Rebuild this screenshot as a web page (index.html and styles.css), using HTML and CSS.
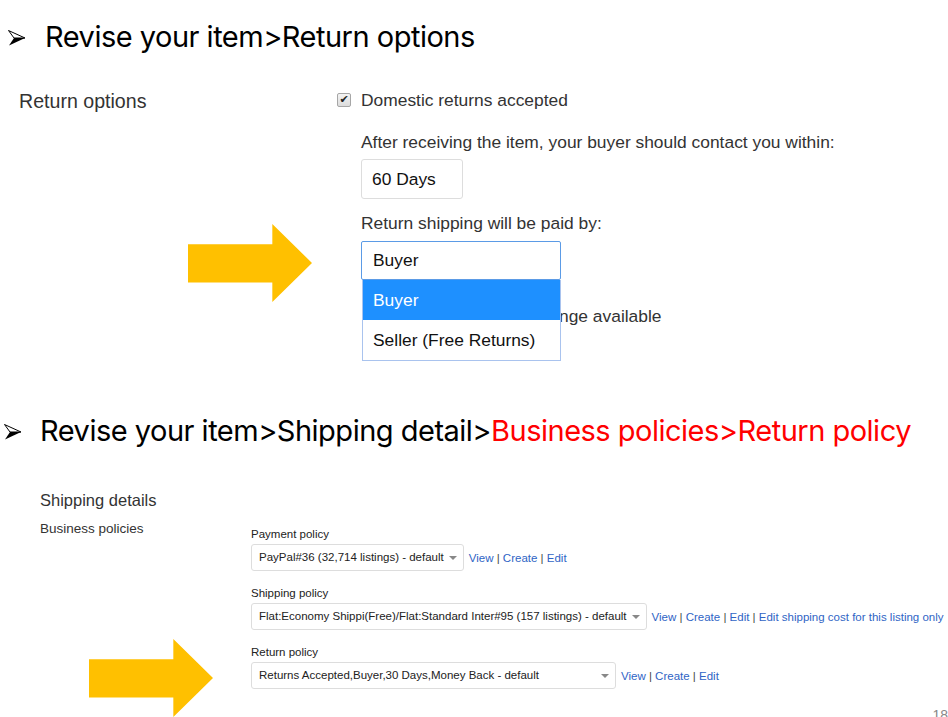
FILE: index.html
```html
<!DOCTYPE html>
<html lang="en">
<head>
  <meta charset="UTF-8" />
  <meta name="viewport" content="width=device-width, initial-scale=1.0"/>
  <link rel="stylesheet" href="styles.css">
</head>
<body>
  <div class="slide">
    <h2 class="slide-title first">
      <svg class="bullet" width="18" height="16" viewBox="0 0 18 16">
        <polygon points="0.5,0.5 17,8 6,8" fill="#fff" stroke="#000" stroke-width="1" stroke-linejoin="miter"/>
        <polygon points="6,8 17,8 1,15.5" fill="#000"/>
      </svg>Revise your item&gt;Return options</h2>

    <div class="return-options">
      <div class="form-label">Return options</div>
      <div class="form-fields">
        <div class="check-row">
          <span class="checkbox checked">&#10004;</span>
          <span>Domestic returns accepted</span>
        </div>
        <div class="field-text">After receiving the item, your buyer should contact you within:</div>
        <div class="days-box">60 Days</div>
        <div class="field-text paid-label">Return shipping will be paid by:</div>
        <div class="paid-by">
          <div class="paid-select">Buyer</div>
          <ul class="paid-list">
            <li class="selected">Buyer</li>
            <li>Seller (Free Returns)</li>
          </ul>
          <div class="check-row exchange">
            <span class="checkbox"></span>
            <span>Replacement or exchange available</span>
          </div>
        </div>
      </div>
      <div class="big-arrow upper"></div>
    </div>

    <h2 class="slide-title second">
      <svg class="bullet" width="18" height="16" viewBox="0 0 18 16">
        <polygon points="0.5,0.5 17,8 6,8" fill="#fff" stroke="#000" stroke-width="1" stroke-linejoin="miter"/>
        <polygon points="6,8 17,8 1,15.5" fill="#000"/>
      </svg>Revise your item&gt;Shipping detail&gt;<span class="red">Business policies&gt;Return policy</span></h2>

    <div class="shipping-details">
      <div class="shipping-head">
        <div class="section-title">Shipping details</div>
        <div class="section-sub">Business policies</div>
      </div>
      <div class="policies">
        <div class="policy">
          <div class="policy-label">Payment policy</div>
          <div class="policy-row">
            <div class="policy-select">PayPal#36 (32,714 listings) - default<span class="caret"></span></div>
            <div class="links"><a>View</a> | <a>Create</a> | <a>Edit</a></div>
          </div>
        </div>
        <div class="policy">
          <div class="policy-label">Shipping policy</div>
          <div class="policy-row">
            <div class="policy-select">Flat:Economy Shippi(Free)/Flat:Standard Inter#95 (157 listings) - default<span class="caret"></span></div>
            <div class="links"><a>View</a> | <a>Create</a> | <a>Edit</a> | <a>Edit shipping cost for this listing only</a></div>
          </div>
        </div>
        <div class="policy">
          <div class="policy-label">Return policy</div>
          <div class="policy-row">
            <div class="policy-select returns">Returns Accepted,Buyer,30 Days,Money Back - default<span class="caret"></span></div>
            <div class="links"><a>View</a> | <a>Create</a> | <a>Edit</a></div>
          </div>
        </div>
      </div>
      <div class="big-arrow lower"></div>
    </div>

    <span class="page-num">18</span>
  </div>
</body>
</html>
```

FILE: styles.css
```css
body {
  margin: 0;
  background: #fff;
  font-family: 'Liberation Sans', Arial, sans-serif;
  color: #333;
}
.slide {
  position: relative;
  width: 948px;
  height: 717px;
  overflow: hidden;
}
.slide-title {
  display: flex;
  align-items: center;
  margin: 0;
  font-family: 'Inter', sans-serif;
  font-weight: 400;
  font-size: 29px;
  line-height: 36px;
  letter-spacing: -0.5px;
  color: #000;
  white-space: nowrap;
}
.slide-title.first {
  padding: 19px 0 0 8px;
}
.slide-title.second {
  padding: 0 0 0 4px;
}
.slide-title .bullet {
  flex-shrink: 0;
  margin: 2px 19px 0 0;
}
.slide-title.second .bullet {
  margin-right: 18px;
}
.red { color: #f00; }

/* Return options form */
.return-options {
  position: relative;
  display: flex;
  padding: 35px 0 0 19px;
  height: 323px;
}
.form-label {
  width: 318px;
  font-size: 19.6px;
  line-height: 22px;
}
.form-fields {
  font-size: 17.4px;
  line-height: 20px;
}
.check-row {
  display: flex;
  align-items: center;
  gap: 10px;
}
.checkbox {
  box-sizing: border-box;
  width: 14px;
  height: 14px;
  border: 1px solid #a6a6a6;
  border-radius: 2px;
  background: linear-gradient(#f4f4f4, #dcdcdc);
  color: #222;
  font-family: 'DejaVu Sans', sans-serif;
  font-size: 11px;
  line-height: 12px;
  text-align: center;
}
.field-text {
  margin: 22px 0 0 24px;
}
.field-text.paid-label {
  margin-top: 14px;
}
.days-box {
  margin: 7px 0 0 24px;
  width: 90px;
  height: 38px;
  padding-left: 10px;
  border: 1px solid #ddd;
  border-radius: 3px;
  line-height: 38px;
  color: #111;
}
.paid-by {
  position: relative;
  margin: 8px 0 0 24px;
}
.paid-select {
  width: 187px;
  height: 37px;
  padding-left: 11px;
  border: 1px solid #5b9be6;
  border-radius: 2px;
  line-height: 37px;
  color: #111;
}
.paid-list {
  position: absolute;
  top: 39px;
  left: 1px;
  z-index: 2;
  margin: 0;
  padding: 0;
  list-style: none;
  width: 197px;
  background: #fff;
  border: 1px solid #a9c3ee;
  border-top: none;
}
.paid-list li {
  height: 40px;
  line-height: 40px;
  padding-left: 10px;
  color: #111;
}
.paid-list li.selected {
  background: #1e90ff;
  color: #fff;
}
.check-row.exchange {
  margin: 26px 0 0 4px;
  gap: 6px;
}
.big-arrow {
  position: absolute;
  width: 124px;
  height: 78px;
  background: #ffc000;
  clip-path: polygon(0 26%, 68% 26%, 68% 0, 100% 50%, 68% 100%, 68% 75%, 0 75%);
}
.big-arrow.upper {
  left: 188px;
  top: 169px;
}

/* Shipping details / business policies */
.shipping-details {
  position: relative;
  display: flex;
  padding: 41px 0 0 40px;
  height: 250px;
}
.shipping-head {
  flex-shrink: 0;
  width: 211px;
}
.section-title {
  font-size: 16.5px;
  line-height: 20px;
}
.section-sub {
  margin-top: 11px;
  font-size: 13.5px;
  line-height: 16px;
}
.policies {
  padding-top: 37px;
  font-size: 11.5px;
}
.policy {
  margin-bottom: 15px;
}
.policy-label {
  line-height: 14px;
  color: #222;
  margin-bottom: 3px;
}
.policy-row {
  display: flex;
  align-items: center;
  gap: 5px;
}
.policy-select {
  position: relative;
  height: 25px;
  line-height: 25px;
  padding: 0 19px 0 7px;
  border: 1px solid #ddd;
  border-radius: 3px;
  color: #222;
  white-space: nowrap;
}
.policy-select.returns {
  width: 337px;
}
.caret {
  position: absolute;
  right: 6px;
  top: 11px;
  border-left: 4px solid transparent;
  border-right: 4px solid transparent;
  border-top: 4px solid #888;
}
.links {
  color: #444;
  white-space: nowrap;
}
.links a {
  color: #2f64c5;
}
.big-arrow.lower {
  left: 89px;
  top: 190px;
}
.page-num {
  position: absolute;
  right: 0;
  bottom: -6px;
  font-size: 14px;
  color: #888;
}
```
